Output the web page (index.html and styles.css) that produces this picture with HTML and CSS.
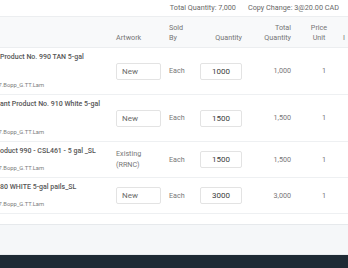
FILE: index.html
```html
<!DOCTYPE html>
<html>
<head>
<meta charset="utf-8">
<link rel="stylesheet" href="styles.css">
</head>
<body>
<div class="page">
  <div class="summary">
    <span>Total Quantity: 7,000</span>
    <span>Copy Change: 3@20.00 CAD</span>
  </div>
  <div class="table-wrap">
    <table class="items">
      <colgroup>
        <col class="w-prod"><col class="w-art"><col class="w-sold"><col class="w-qty"><col class="w-total"><col class="w-price"><col class="w-more">
      </colgroup>
      <thead>
        <tr>
          <th class="c-prod"></th>
          <th class="c-art">Artwork</th>
          <th class="c-sold">Sold<br>By</th>
          <th class="c-qty">Quantity</th>
          <th class="c-total">Total<br>Quantity</th>
          <th class="c-price">Price<br>Unit</th>
          <th class="c-more">I<br></th>
        </tr>
      </thead>
      <tbody>
        <tr class="tall">
          <td class="c-prod"><div class="name">Product No. 990 TAN 5-gal</div><div class="spacer"></div><div class="sub">7.Bopp_G.TT.Lam</div></td>
          <td class="c-art"><input class="field art-field" type="text" value="New" readonly></td>
          <td class="c-sold">Each</td>
          <td class="c-qty"><input class="field qty-field" type="text" value="1000" readonly></td>
          <td class="c-total">1,000</td>
          <td class="c-price"><span class="unit">1</span></td>
          <td class="c-more"></td>
        </tr>
        <tr class="tall">
          <td class="c-prod"><div class="name">ant Product No. 910 White 5-gal</div><div class="spacer"></div><div class="sub">7.Bopp_G.TT.Lam</div></td>
          <td class="c-art"><input class="field art-field" type="text" value="New" readonly></td>
          <td class="c-sold">Each</td>
          <td class="c-qty"><input class="field qty-field" type="text" value="1500" readonly></td>
          <td class="c-total">1,500</td>
          <td class="c-price"><span class="unit">1</span></td>
          <td class="c-more"></td>
        </tr>
        <tr>
          <td class="c-prod"><div class="name">oduct 990 - CSL461 - 5 gal _SL</div><div class="sub">7.Bopp_G.TT.Lam</div></td>
          <td class="c-art"><div class="art-text">Existing<br>(RRNC)</div></td>
          <td class="c-sold">Each</td>
          <td class="c-qty"><input class="field qty-field" type="text" value="1500" readonly></td>
          <td class="c-total">1,500</td>
          <td class="c-price"><span class="unit">1</span></td>
          <td class="c-more"></td>
        </tr>
        <tr>
          <td class="c-prod"><div class="name">80 WHITE 5-gal pails_SL</div><div class="sub">7.Bopp_G.TT.Lam</div></td>
          <td class="c-art"><input class="field art-field" type="text" value="New" readonly></td>
          <td class="c-sold">Each</td>
          <td class="c-qty"><input class="field qty-field" type="text" value="3000" readonly></td>
          <td class="c-total">3,000</td>
          <td class="c-price"><span class="unit">1</span></td>
          <td class="c-more"></td>
        </tr>
      </tbody>
    </table>
  </div>
  <div class="footer-gap"></div>
  <div class="footer"></div>
  <div class="bottom-bar"></div>
</div>
</body>
</html>
```

FILE: styles.css
```css
html, body {
  margin: 0;
  padding: 0;
  background: #ffffff;
}

body {
  font-family: Roboto, "Liberation Sans", sans-serif;
  font-size: 7.2px;
  color: #707070;
}

.page {
  width: 348px;
  height: 268px;
  overflow: hidden;
  display: flex;
  flex-direction: column;
}

.summary {
  height: 16px;
  display: flex;
  justify-content: flex-end;
  align-items: center;
  gap: 12px;
  padding-right: 9px;
  color: #686868;
  font-size: 7.25px;
  line-height: 16px;
}

.table-wrap {
  width: 348px;
  overflow: hidden;
}

.items {
  table-layout: fixed;
  width: 403px;
  border-collapse: collapse;
  border-spacing: 0;
}

.w-prod { width: 110px; }
.w-art { width: 55px; }
.w-sold { width: 31px; }
.w-qty { width: 50px; }
.w-total { width: 49px; }
.w-price { width: 48px; }
.w-more { width: 60px; }

.items th {
  background: #f8f9fa;
  border-top: 1px solid #eceef0;
  border-bottom: 1px solid #eceef0;
  height: 30px;
  box-sizing: border-box;
  padding: 6px 0 4px;
  vertical-align: bottom;
  font-weight: 400;
  line-height: 10px;
  color: #757575;
  text-align: left;
  white-space: nowrap;
}

.items td {
  border-bottom: 1px solid #eef0f2;
  padding: 0;
  vertical-align: middle;
  line-height: 10px;
  color: #777777;
  white-space: nowrap;
}

.items td.c-prod {
  padding: 4px 0 4px 0;
  vertical-align: top;
  overflow: hidden;
}

.name {
  color: #555555;
  font-weight: 500;
  font-size: 7px;
  line-height: 10px;
}

.spacer {
  height: 11px;
}

.sub {
  margin-top: 8px;
  font-size: 5.8px;
  line-height: 9px;
  color: #7c7c7c;
  text-indent: -1.5px;
}

.c-art { padding-left: 6px !important; }
.items th.c-art { padding-left: 5px; }

.c-sold { padding-left: 4px !important; }

.items th.c-qty, .items td.c-qty {
  text-align: right;
  padding-right: 4px;
}

.items th.c-total, .items td.c-total {
  text-align: right;
  padding-right: 4px;
}

.items th.c-price, .items td.c-price {
  text-align: center;
}

.unit {
  display: inline-block;
  padding-left: 10px;
}

.items th.c-more {
  padding-left: 0;
  vertical-align: bottom;
}

.art-text {
  line-height: 10.5px;
  color: #777777;
}

.field {
  box-sizing: border-box;
  height: 17px;
  margin: 0;
  border: 1px solid #e3e3e3;
  border-radius: 2px;
  background: #ffffff;
  font-family: Roboto, "Liberation Sans", sans-serif;
  font-size: 8px;
  outline: none;
  display: block;
}

.art-field {
  width: 45px;
  padding: 0 5px;
  text-align: left;
  color: #6a6a6a;
}

.qty-field {
  width: 42px;
  padding: 0 4px;
  text-align: center;
  margin-left: auto;
  color: #3c3c3c;
}

.footer-gap {
  height: 10px;
  flex: none;
}

.footer {
  height: 29px;
  flex: none;
  background: #f5f7f9;
  border-top: 1px solid #e6e9ec;
  border-bottom: 1px solid #e9ecef;
}

.bottom-bar {
  flex: 1;
  background: #1e2a35;
}
```
